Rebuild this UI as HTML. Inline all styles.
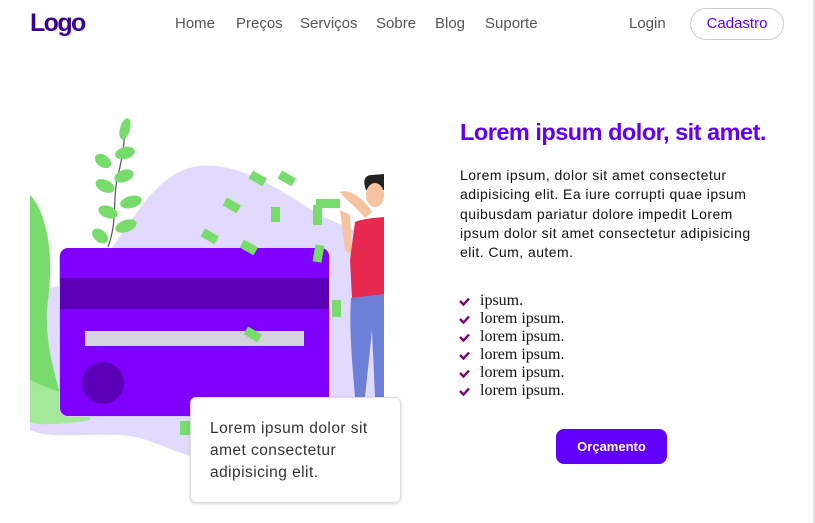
<!DOCTYPE html>
<html><head><meta charset="utf-8"><style>
*{margin:0;padding:0;box-sizing:border-box}
body{width:815px;height:523px;background:#fff;position:relative;overflow:hidden;font-family:"Liberation Sans",sans-serif}
.edge{position:absolute;right:0;top:0;width:2px;height:523px;background:#e4e4e4}
.logo{position:absolute;left:30px;top:9px;font-size:25px;font-weight:bold;color:#3a0094;letter-spacing:-1.6px}
.nav{position:absolute;top:15px;font-size:15px;color:#555}
.cad{position:absolute;left:690px;top:8px;width:94px;height:32px;border:1px solid #ccc;border-radius:16px;color:#6200ff;font-size:15px;text-align:center;line-height:30px}
h1{position:absolute;left:460px;top:119px;font-size:23.5px;color:#6200f5;letter-spacing:-0.5px;white-space:nowrap}
.p{position:absolute;left:460px;top:166px;width:302px;font-size:14px;letter-spacing:.45px;line-height:19.3px;color:#111}
ul{position:absolute;left:459px;top:292px;list-style:none;font-family:"Liberation Serif",serif;font-size:16px;line-height:18px;color:#111}
ul li{padding-left:21px;position:relative}
ul li svg{position:absolute;left:0;top:5px}
.btn{position:absolute;left:556px;top:429px;width:111px;height:35px;background:#6200ff;border-radius:8px;color:#fff;font-size:13px;font-weight:bold;text-align:center;line-height:35px}
.tc{position:absolute;left:190px;top:397px;width:211px;height:106px;background:#fff;border:1px solid #ddd;border-radius:6px;box-shadow:0 1px 3px rgba(0,0,0,.15);padding:20px 10px 20px 19px;font-size:15.5px;letter-spacing:.45px;line-height:22px;color:#333}
</style></head><body>
<div class="edge"></div>
<div class="logo">Logo</div>
<div class="nav" style="left:175px">Home</div>
<div class="nav" style="left:236px">Preços</div>
<div class="nav" style="left:300px">Serviços</div>
<div class="nav" style="left:376px">Sobre</div>
<div class="nav" style="left:435px">Blog</div>
<div class="nav" style="left:485px">Suporte</div>
<div class="nav" style="left:629px">Login</div>
<div class="cad">Cadastro</div>

<svg style="position:absolute;left:0;top:0" width="410" height="523">
<defs><clipPath id="c"><rect x="30" y="100" width="354" height="380"/></clipPath></defs>
<g clip-path="url(#c)">
<path d="M30 290 C60 290 80 280 110 250 C140 210 160 170 200 166 C240 162 280 190 320 215 C350 230 384 240 384 250 L384 400 C360 420 320 440 250 462 C200 470 160 440 130 436 C90 432 50 440 30 430Z" fill="#e2dafd"/>
<path d="M30 195 C45 210 55 250 48 300 C44 330 50 360 62 400 L30 400Z" fill="#78dc6c"/>
<path d="M30 380 C50 390 70 395 90 400 L90 420 C60 425 40 425 30 423Z" fill="#a4e89a"/>
<path d="M108 247 C118 220 112 200 118 175 C122 160 125 140 125 125" stroke="#555" stroke-width="1.2" fill="none"/>
<g fill="#78dc6c">
<ellipse cx="125" cy="129" rx="5" ry="11" transform="rotate(15 125 129)"/>
<ellipse cx="103" cy="161" rx="9" ry="6" transform="rotate(35 103 161)"/>
<ellipse cx="125" cy="153" rx="10" ry="6" transform="rotate(-15 125 153)"/>
<ellipse cx="105" cy="186" rx="10" ry="6" transform="rotate(25 105 186)"/>
<ellipse cx="124" cy="176" rx="10" ry="6" transform="rotate(-20 124 176)"/>
<ellipse cx="108" cy="212" rx="10" ry="6" transform="rotate(20 108 212)"/>
<ellipse cx="131" cy="202" rx="11" ry="6" transform="rotate(-15 131 202)"/>
<ellipse cx="100" cy="236" rx="9" ry="6" transform="rotate(40 100 236)"/>
<ellipse cx="126" cy="226" rx="11" ry="6" transform="rotate(-20 126 226)"/>
</g>
<rect x="59" y="248" width="271" height="169" rx="9" fill="#d7cff0"/>
<rect x="60" y="248" width="269" height="168" rx="8" fill="#8000ff"/>
<rect x="60" y="278" width="269" height="31" fill="#5c00b8"/>
<rect x="85" y="331" width="219" height="15" fill="#d6d3e0"/>
<circle cx="103" cy="383" r="21" fill="#5c00b8"/>
<g fill="#78dc6c">
<rect x="250" y="174" width="16" height="9" transform="rotate(30 258 178)"/>
<rect x="279" y="174" width="16" height="9" transform="rotate(30 287 178)"/>
<rect x="224" y="201" width="16" height="9" transform="rotate(30 232 205)"/>
<rect x="271" y="207" width="9" height="15"/>
<rect x="202" y="232" width="16" height="9" transform="rotate(30 210 236)"/>
<rect x="241" y="243" width="16" height="9" transform="rotate(30 249 247)"/>
<rect x="314" y="245" width="9" height="17" transform="rotate(10 318 253)"/>
<rect x="332" y="300" width="9" height="17"/>
<rect x="245" y="330" width="16" height="9" transform="rotate(30 253 334)"/>
<rect x="180" y="421" width="10" height="14"/>
<rect x="313" y="205" width="9" height="20"/>
<rect x="316" y="199" width="24" height="9"/>
</g>
<path d="M372 175 C362 175 364 185 366 190 L384 190 L384 174Z" fill="#222"/>
<ellipse cx="375" cy="195" rx="9" ry="12" fill="#f7c2a0"/>
<path d="M340 192 C350 188 365 200 372 212 L365 218 C355 205 345 200 340 192Z" fill="#f7c2a0"/>
<path d="M340 210 L345 250 L352 255 L350 215Z" fill="#f7c2a0"/>
<path d="M355 222 C365 218 375 218 384 217 L384 295 L352 298 L350 260 Z" fill="#e8294f"/>
<path d="M351 298 L384 294 L384 397 L375 397 L372 330 L365 397 L355 397 C352 360 349 330 351 298Z" fill="#6b80d6"/>
</g>
</svg>
<div class="tc">Lorem ipsum dolor sit amet consectetur adipisicing elit.</div>

<h1>Lorem ipsum dolor, sit amet.</h1>
<div class="p">Lorem ipsum, dolor sit amet consectetur adipisicing elit. Ea iure corrupti quae ipsum quibusdam pariatur dolore impedit Lorem ipsum dolor sit amet consectetur adipisicing elit. Cum, autem.</div>
<ul>
<li><svg width="11" height="9"><path d="M1 4 L4.5 7.5 L10 1.5" stroke="#7a007a" stroke-width="2.4" fill="none"/></svg>ipsum.</li>
<li><svg width="11" height="9"><path d="M1 4 L4.5 7.5 L10 1.5" stroke="#7a007a" stroke-width="2.4" fill="none"/></svg>lorem ipsum.</li>
<li><svg width="11" height="9"><path d="M1 4 L4.5 7.5 L10 1.5" stroke="#7a007a" stroke-width="2.4" fill="none"/></svg>lorem ipsum.</li>
<li><svg width="11" height="9"><path d="M1 4 L4.5 7.5 L10 1.5" stroke="#7a007a" stroke-width="2.4" fill="none"/></svg>lorem ipsum.</li>
<li><svg width="11" height="9"><path d="M1 4 L4.5 7.5 L10 1.5" stroke="#7a007a" stroke-width="2.4" fill="none"/></svg>lorem ipsum.</li>
<li><svg width="11" height="9"><path d="M1 4 L4.5 7.5 L10 1.5" stroke="#7a007a" stroke-width="2.4" fill="none"/></svg>lorem ipsum.</li>
</ul>
<div class="btn">Orçamento</div>
</body></html>
